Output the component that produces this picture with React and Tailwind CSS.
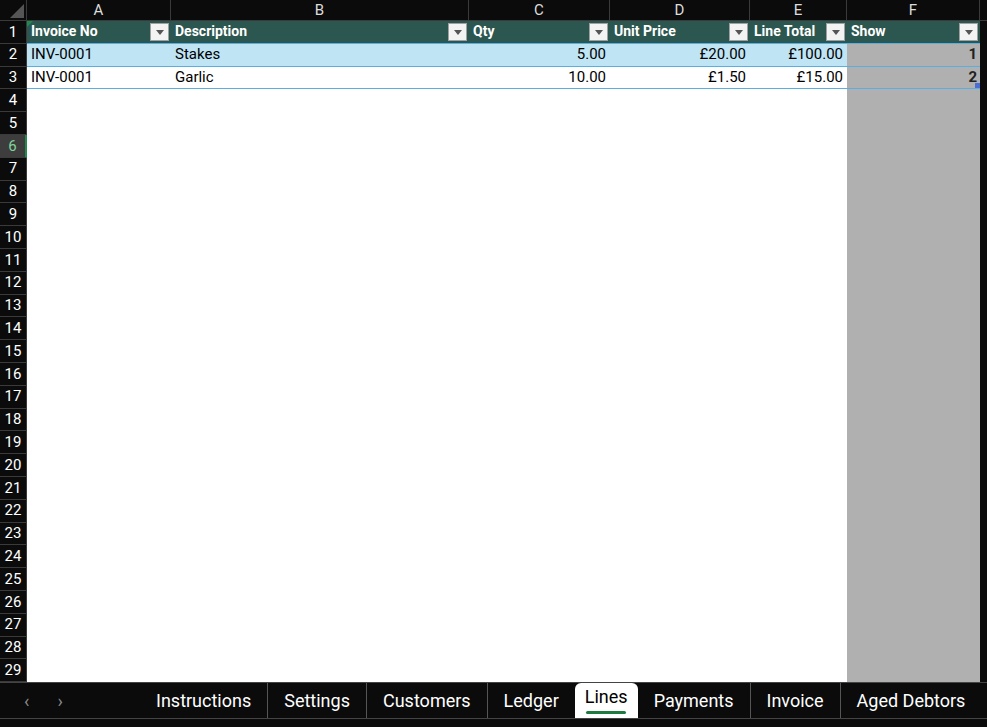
const cols = [
  { l: 'A', w: 144 },
  { l: 'B', w: 298 },
  { l: 'C', w: 141 },
  { l: 'D', w: 140 },
  { l: 'E', w: 97 },
  { l: 'F', w: 133 },
]
const heads = ['Invoice No', 'Description', 'Qty', 'Unit Price', 'Line Total', 'Show']
const data = [
  ['INV-0001', 'Stakes', '5.00', '£20.00', '£100.00', '1'],
  ['INV-0001', 'Garlic', '10.00', '£1.50', '£15.00', '2'],
]
const tabs = ['Instructions', 'Settings', 'Customers', 'Ledger', 'Lines', 'Payments', 'Invoice', 'Aged Debtors']

function Drop() {
  return (
    <span className="absolute right-[2px] top-[2px] w-[19px] h-[18px] bg-[#f3f3f3] border border-[#a0a0a0] flex items-center justify-center">
      <svg width="8" height="5" viewBox="0 0 8 5"><path d="M0 0h8L4 5z" fill="#555" /></svg>
    </span>
  )
}

function Row({ n, children, sel }) {
  return (
    <div className="flex h-[22.8px]">
      <div className={`w-[27px] shrink-0 flex items-center justify-center text-[15px] border-b border-r border-[#3a3a3a] ${sel ? 'bg-[#3d3d3d] text-[#7fd49a] border-r-[#1f8a4c] border-r-2' : 'bg-[#0b0b0b] text-white'}`}>{n}</div>
      {children}
    </div>
  )
}

export default function App() {
  const rows = []
  for (let i = 4; i <= 29; i++) {
    rows.push(
      <Row key={i} n={i} sel={i === 6}>
        <div className="w-[820px] bg-white" />
        <div className="w-[133px] bg-[#b0b0b0]" />
        <div className="flex-1 bg-[#0b0b0b]" />
      </Row>
    )
  }
  return (
    <div className="w-[987px] h-[727px] bg-[#0b0b0b] overflow-hidden flex flex-col" style={{ fontFamily: 'Roboto, "Liberation Sans", sans-serif' }}>
      <div className="flex h-[21px] shrink-0">
        <div className="w-[27px] relative border-r border-b border-[#3a3a3a]">
          <svg className="absolute right-[2px] bottom-[2px]" width="14" height="14" viewBox="0 0 14 14"><path d="M14 0V14H0z" fill="#555" /></svg>
        </div>
        {cols.map(c => (
          <div key={c.l} style={{ width: c.w }} className="shrink-0 text-[#ddd] text-[15px] flex items-center justify-center border-r border-b border-[#3a3a3a]">{c.l}</div>
        ))}
        <div className="flex-1 border-b border-[#3a3a3a]" />
      </div>
      <Row n={1}>
        {cols.map((c, i) => (
          <div key={c.l} style={{ width: c.w }} className="shrink-0 relative bg-[#2c5650] text-white font-bold text-[14px] flex items-center px-[4px] border-b border-[#5aaee0]">
            {i === 0 && <span className="absolute left-0 top-0 w-0 h-0 border-t-[6px] border-r-[6px] border-t-[#1f8a4c] border-r-transparent" />}
            {heads[i]}
            <Drop />
          </div>
        ))}
        <div className="flex-1" />
      </Row>
      {data.map((r, ri) => (
        <Row key={ri} n={ri + 2}>
          {cols.map((c, i) => (
            <div key={c.l} style={{ width: c.w }} className={`shrink-0 relative text-[15px] flex items-center px-[4px] border-b border-[#5aaee0] ${i === 5 ? 'bg-[#b0b0b0] font-bold text-[#222] justify-end pr-[3px]' : ri === 0 ? 'bg-[#bfe4f4] text-black' : 'bg-white text-black'} ${i >= 2 && i < 5 ? 'justify-end' : ''}`}>
              {r[i]}
              {i === 5 && ri === 1 && <span className="absolute right-0 bottom-0 w-[5px] h-[5px] bg-[#4a6ed8]" />}
            </div>
          ))}
          <div className="flex-1" />
        </Row>
      ))}
      {rows}
      <div className="flex-1 flex flex-col border-t border-[#444]">
        <div className="h-[35px] flex items-end text-white text-[18px]">
          <div className="w-[140px] flex items-center gap-[28px] pl-[24px] h-full text-[#888] text-[18px]">
            <span>‹</span><span>›</span>
          </div>
          {tabs.map((t, i) => (
            t === 'Lines' ? (
              <div key={t} className="h-[35px] px-[10px] bg-white text-black rounded-t-[6px] flex flex-col items-center justify-center">
                <span className="leading-none">{t}</span>
                <span className="mt-[5px] h-[3px] w-[40px] bg-[#1f7a40] rounded" />
              </div>
            ) : (
              <div key={t} className={`h-full flex items-center px-[16px] ${i < tabs.length - 1 && tabs[i + 1] !== 'Lines' ? 'border-r border-[#555] my-0' : ''}`}>
                <span>{t}</span>
              </div>
            )
          ))}
        </div>
        <div className="flex-1 border-t border-[#444] bg-[#0b0b0b]" />
      </div>
    </div>
  )
}
